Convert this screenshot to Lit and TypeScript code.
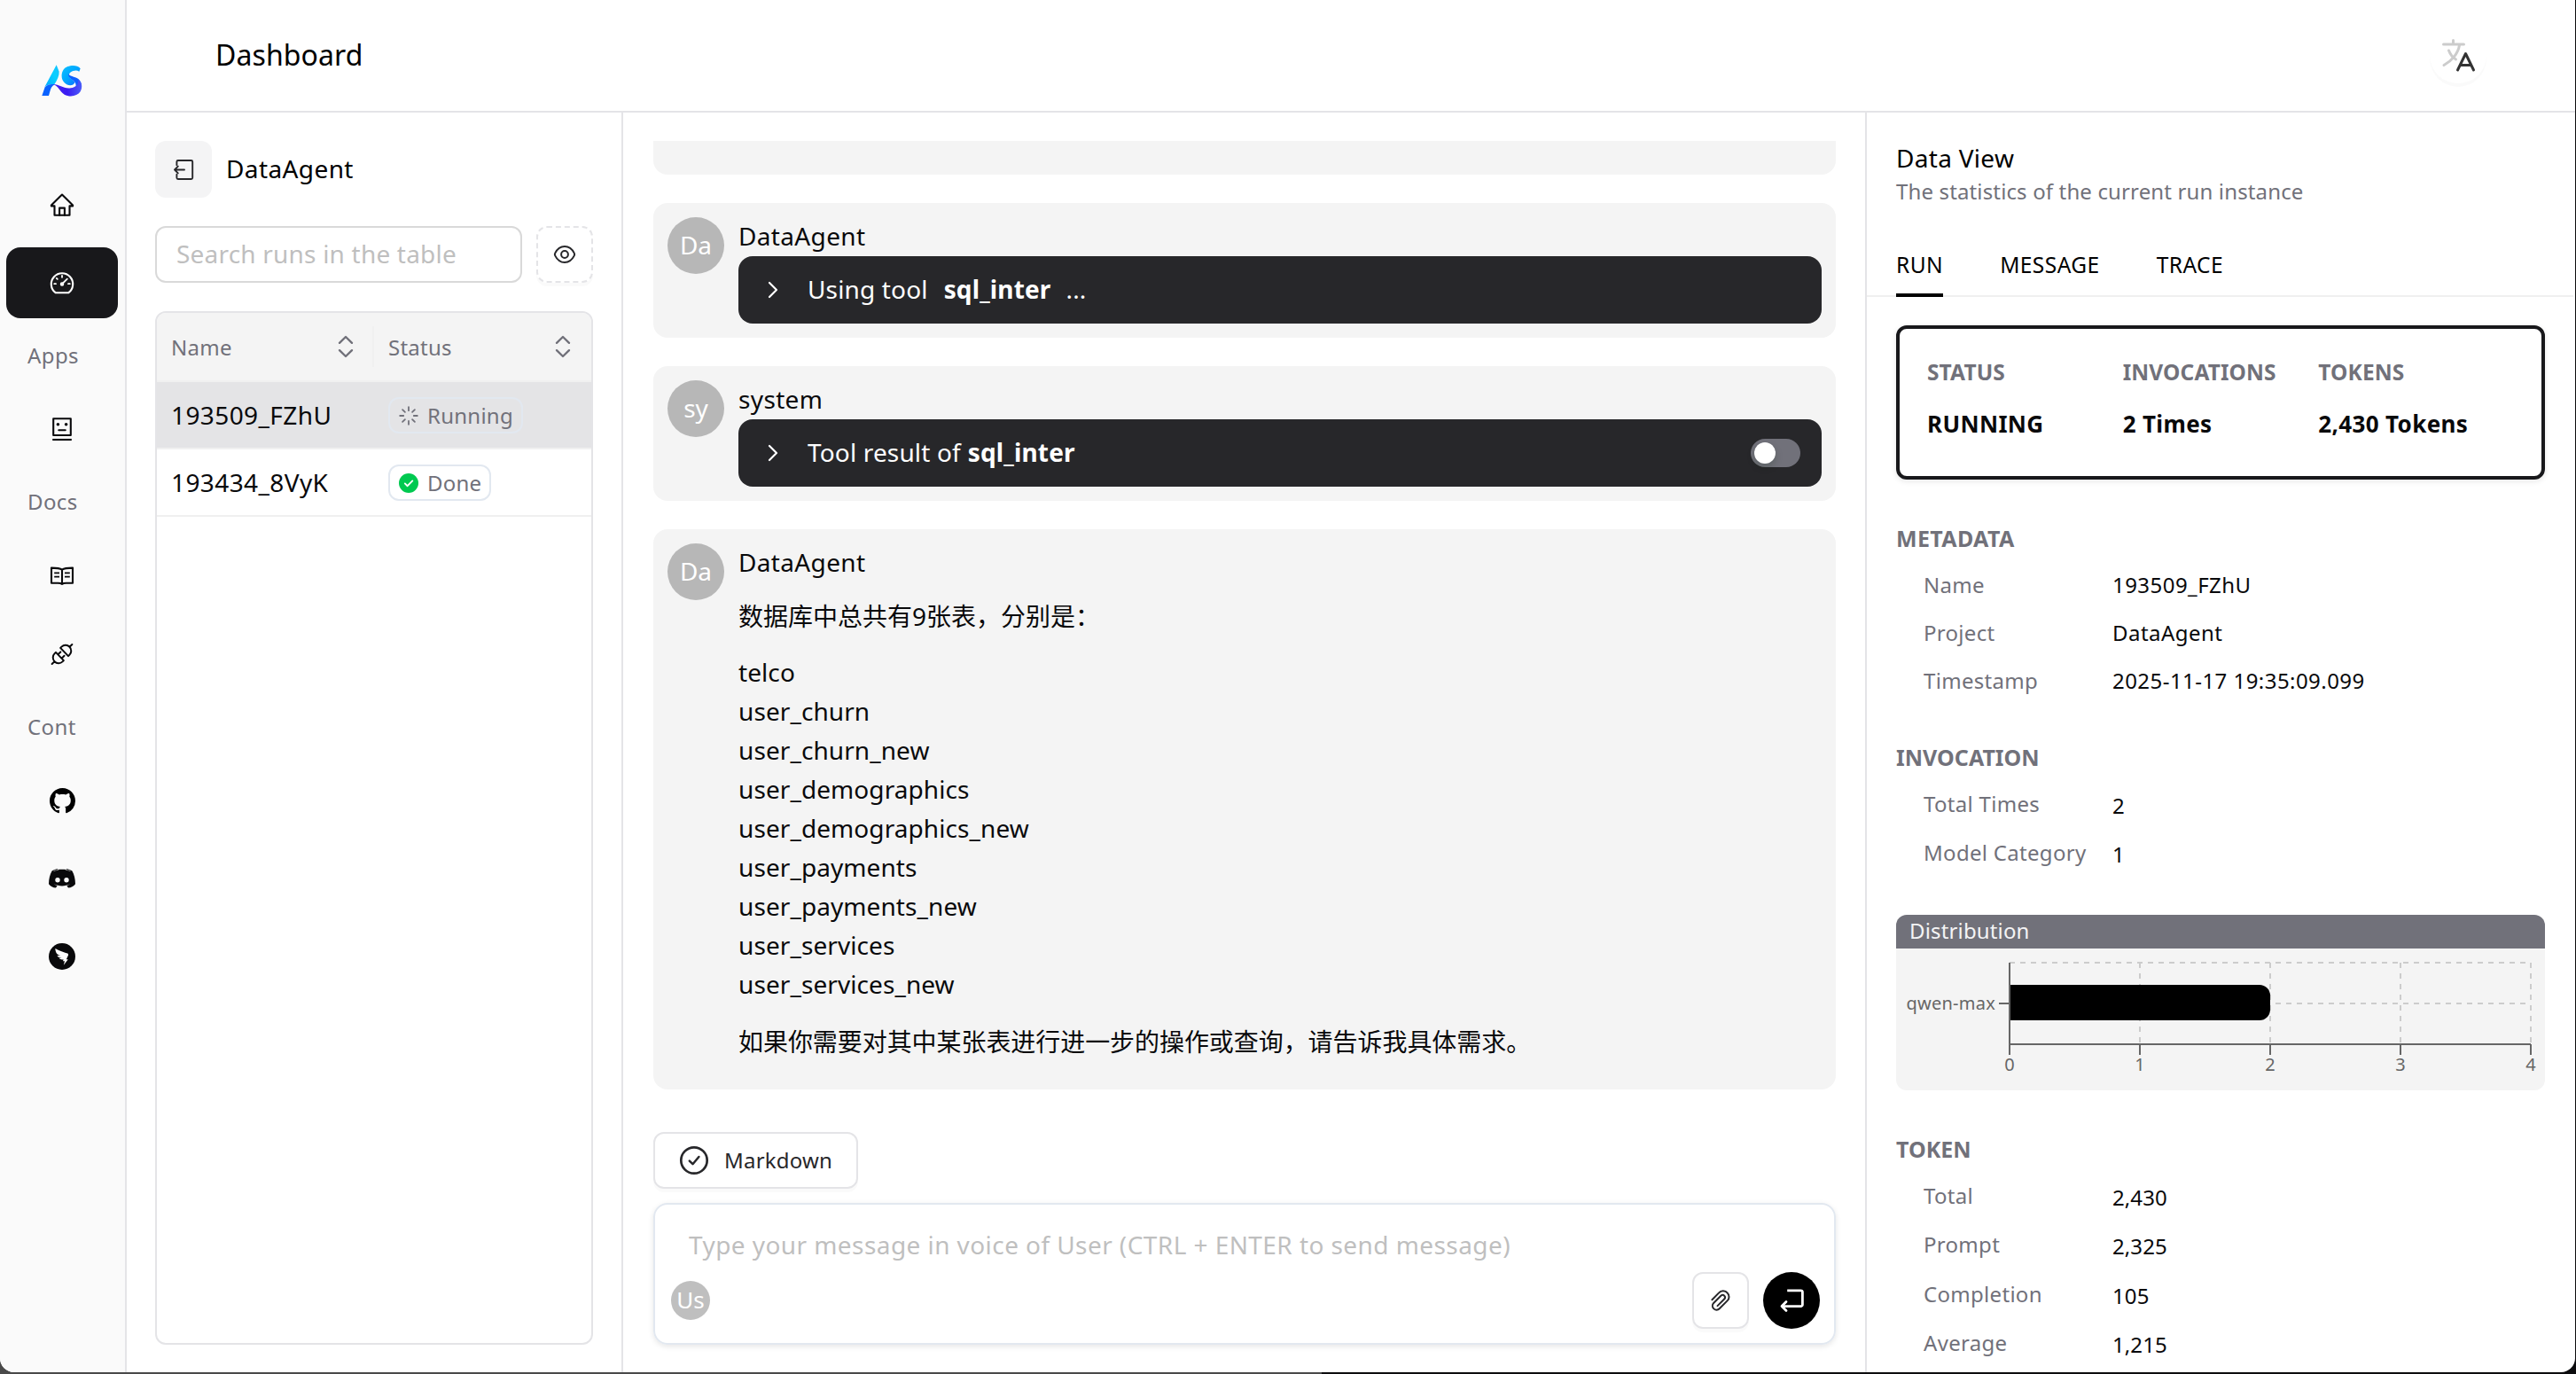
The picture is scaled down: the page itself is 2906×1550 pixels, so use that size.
import { LitElement, html, svg, css } from "lit";
import { customElement } from "lit/decorators.js";

const stroke = (w: number, body: unknown, size = 32) => html`<svg
  width=${size}
  height=${size}
  viewBox="0 0 ${size} ${size}"
  fill="none"
  stroke="currentColor"
  stroke-width=${w}
  stroke-linejoin="round"
  stroke-linecap="round"
  overflow="visible"
>${body}</svg>`;

const icons = {
  home: stroke(2.1, svg`<path d="M16 4.6 3.9 16.4V17.4H7.5V27.8H24.5V17.4H28.1V16.4Z"/><path d="M13.1 27.8V19.6H18.9V27.8"/>`),
  gauge: stroke(2.1, svg`<path d="M8.6 27.2A12.2 12.2 0 1 1 23.4 27.2Z"/><path stroke-width="1.8" d="M16 8V9.8M9.8 10.9l1 1M7.2 17.2H9M23 17.2h1.8M16.4 17 21.8 11.6"/><circle cx="16" cy="17.6" r="1.2" fill="currentColor"/>`),
  robot: stroke(2.1, svg`<rect x="6.2" y="4.2" width="19.6" height="18.8"/><path stroke-linecap="butt" d="M5.2 28H26.8"/><path d="M12.3 17.2H19.7"/><circle cx="11.4" cy="10.8" r="1.8" fill="currentColor" stroke="none"/><circle cx="20.6" cy="10.8" r="1.8" fill="currentColor" stroke="none"/>`),
  book: stroke(2.1, svg`<path d="M16 8.6C13.6 7 10 6.6 4 6.6V23.8H11.5C13.8 23.8 15 24.2 16 25 17 24.2 18.2 23.8 20.5 23.8H28V6.6C22 6.6 18.4 7 16 8.6ZM16 8.6V25"/><path stroke-width="1.6" stroke-linecap="butt" d="M7.2 12.4H13M7.2 16.6H13M19 12.4H24.8M19 16.6H24.8"/>`),
  plug: stroke(2, svg`<g transform="rotate(-44 16 16)"><path d="M19.6 9.6V22.4H21.4A6.4 6.4 0 0 0 21.4 9.6ZM27.8 16H31.8M12.4 9.6V22.4H10.6A6.4 6.4 0 0 1 10.6 9.6ZM4.2 16H.2M12.4 13H16.6M12.4 19H16.6"/></g>`),
  github: html`<svg width="29" height="29" viewBox="0 0 16 16" fill="#000"><path d="M8 0C3.58 0 0 3.58 0 8c0 3.54 2.29 6.53 5.47 7.59.4.07.55-.17.55-.38 0-.19-.01-.82-.01-1.49-2.01.37-2.53-.49-2.69-.94-.09-.23-.48-.94-.82-1.13-.28-.15-.68-.52-.01-.53.63-.01 1.08.58 1.23.82.72 1.21 1.87.87 2.33.66.07-.52.28-.87.51-1.07-1.78-.2-3.64-.89-3.64-3.95 0-.87.31-1.59.82-2.15-.08-.2-.36-1.02.08-2.12 0 0 .67-.21 2.2.82.64-.18 1.32-.27 2-.27.68 0 1.36.09 2 .27 1.53-1.04 2.2-.82 2.2-.82.44 1.1.16 1.92.08 2.12.51.56.82 1.27.82 2.15 0 3.07-1.87 3.75-3.65 3.95.29.25.54.73.54 1.48 0 1.07-.01 1.93-.01 2.2 0 .21.15.46.55.38A8.013 8.013 0 0016 8c0-4.42-3.58-8-8-8z"/></svg>`,
  discord: html`<svg width="30" height="22" viewBox="0 0 30 22"><path fill="#09090b" fill-rule="evenodd" d="M10 .2C7.4.6 5.2 1.4 3.6 2.6 1.2 6.6.1 11.600 0 17.200 1.800 19.800 4.800 21.300 8 21.500L9.600 19.300C7.900 18.800 6.700 18.100 5.900 17.300 11.500 20.100 18.500 20.100 24.100 17.300 23.300 18.100 22.100 18.800 20.400 19.300L22 21.500C25.200 21.300 28.200 19.800 30 17.200 29.900 11.600 28.800 6.600 26.400 2.600 24.800 1.400 22.600.6 20 .2L19.600 1C16.600.5 13.400.5 10.400 1ZM10 10A2.700 2.700 0 1 0 10 15.400 2.700 2.700 0 0 0 10 10ZM20 10A2.700 2.700 0 1 0 20 15.400 2.700 2.700 0 0 0 20 10Z"/><path d="M5.500 2.800C8 1.600 9.500 1.400 11 1.500M24.500 2.800C22 1.600 20.500 1.400 19 1.500" stroke="#bbb" stroke-width=".7" fill="none"/></svg>`,
  ding: html`<svg width="30" height="30" viewBox="0 0 30 30"><circle cx="15" cy="15" r="15" fill="#09090b"/><path fill="#fff" d="M7.300 6C9.500 7.600 16 9.700 21.200 11.600 22.300 12.200 22.200 13.200 21.700 14.300L19.800 18.300H21.800L16.800 24.800 18 20.300H16L16.600 18.200C14.800 18.600 13 18.500 11.700 17.300L14.600 16.700C11.700 16.500 10 15.500 9.500 14L13.500 14.200C10.500 13.400 8.600 12 8.100 10.100 7.700 8.700 7.300 7.300 7.300 6Z"/></svg>`,
  logo: html`<svg width="46" height="36" viewBox="23 41 138 108">
    <defs>
      <linearGradient id="la" x1="0" y1="1" x2="1" y2="0"><stop offset="0" stop-color="#00a8ff"/><stop offset=".6" stop-color="#08d0ff"/><stop offset="1" stop-color="#18c0ff"/></linearGradient>
      <linearGradient id="ls" x1="0" y1="0" x2="1" y2="1"><stop offset="0" stop-color="#0cc2ff"/><stop offset=".5" stop-color="#00a6ff"/><stop offset="1" stop-color="#1060ff"/></linearGradient>
      <linearGradient id="lr" x1="0" y1="0" x2="1" y2="0"><stop offset="0" stop-color="#4a20f0"/><stop offset=".5" stop-color="#3a1cf2"/><stop offset="1" stop-color="#4c5cf8"/></linearGradient>
    </defs>
    <path fill="url(#la)" d="M73 42 82 64C83 78 76 92 66 108 54 106 42 108 33 117Z"/>
    <path fill="#0a62ff" d="M34 117C42 108 54 105 68 108 58 112 54 120 51 132L47 146H24Z"/>
    <path fill="url(#ls)" d="M150 64C142 58 130 60 122 66 112 73 114 82 124 90L136 100C130 114 112 114 100 102 88 90 88 70 98 56 108 43 142 38 154 54Z"/>
    <path fill="#0f60ff" d="M113 72C122 84 140 80 152 94 162 108 160 126 146 132 130 132 146 112 134 98 124 90 112 84 113 72Z"/>
    <path fill="url(#lr)" d="M60 107C84 106 96 124 122 120 140 117 148 108 146 92 160 100 162 116 154 132 144 148 118 152 100 142 84 132 80 112 60 107Z"/>
  </svg>`,
  exit: stroke(1.9, svg`<path d="M4.400 7.200V3.500A1.500 1.500 0 0 1 5.900 2H20.700A1.500 1.500 0 0 1 22.200 3.500V21.500A1.500 1.500 0 0 1 20.700 23H5.900A1.500 1.500 0 0 1 4.400 21.500V17.800"/><path d="M13 12.500H2M5.800 8.600 2 12.500 5.800 16.400"/>`, 24),
  eye: html`<svg width="26" height="22" viewBox="0 0 26 22" fill="none" stroke="#27272a" stroke-width="2"><path d="M13 2C8.500 2 4.600 4.800 2.200 9.600A3 3 0 0 0 2.200 12.400C4.600 17.200 8.500 20 13 20S21.400 17.200 23.800 12.400A3 3 0 0 0 23.800 9.600C21.400 4.800 17.500 2 13 2Z"/><circle cx="13" cy="11" r="3.900"/></svg>`,
  lang: html`<svg width="40" height="40" viewBox="0 0 40 40" fill="none" stroke-linecap="round" stroke-linejoin="round" stroke-width="3"><g stroke="#ccc"><path d="M3.500 8H26.500M14.500 3.500V8M21.500 9C20 18.500 12.500 27 4 31.500M9.500 15C11 19 14 23 17.500 25"/></g><path stroke="#333" d="M19.500 37 28.500 18.500 37.500 37M22.500 31.500H34.500"/></svg>`,
  clip: html`<svg width="24" height="24" viewBox="0 0 24 24" fill="none" stroke="#27272a" stroke-width="2" stroke-linecap="round" stroke-linejoin="round"><path d="M2.400 11.300 9.900 3.600A6.200 6.200 0 0 1 19.800 3.700 6 6 0 0 1 19.800 12.100L10.700 21.300A4.400 4.400 0 0 1 4 21 4.400 4.400 0 0 1 4.100 15L12.600 6.500A2.700 2.700 0 0 1 16.400 10.300L8.500 18.100"/></svg>`,
  send: html`<svg width="32" height="32" viewBox="0 0 32 32" fill="none" stroke="#fff" stroke-width="2.800" stroke-linejoin="miter"><path d="M11.200 4.800H26.600A1.800 1.800 0 0 1 28.400 6.600V20.800A1.800 1.800 0 0 1 26.600 22.600H5"/><path stroke-linejoin="round" stroke-linecap="round" d="M10 17.600 5 22.600 10 27.600"/></svg>`,
  check: html`<svg width="34" height="34" viewBox="0 0 34 34" fill="none" stroke="#27272a" stroke-width="2.700"><circle cx="17" cy="17" r="14.700"/><path stroke-width="2.500" stroke-linecap="round" stroke-linejoin="round" d="M11.800 17.600 15.500 21.200 22.400 13"/></svg>`,
  sorter: html`<svg width="18" height="26" viewBox="0 0 18 26" fill="none" stroke="#71717a" stroke-width="2.400" stroke-linecap="round" stroke-linejoin="round"><path d="M2 8.800 9 2 16 8.800M2 17.200 9 24 16 17.200"/></svg>`,
  chevron: html`<svg width="12" height="20" viewBox="0 0 12 20" fill="none" stroke="#fff" stroke-width="2.200" stroke-linecap="round" stroke-linejoin="round"><path d="M2 2 10 10 2 18"/></svg>`,
  spinner: html`<svg width="22" height="22" viewBox="0 0 22 22" stroke="#71717a" stroke-width="1.800" stroke-linecap="round"><path d="M11 1.200V5.200M11 16.800V20.800M1.200 11H5.200M16.800 11H20.800M4.100 4.100 6.900 6.900M15.100 15.100 17.900 17.900M4.100 17.900 6.900 15.100M15.100 6.900 17.900 4.100"/></svg>`,
  done: html`<svg width="22" height="22" viewBox="0 0 22 22"><circle cx="11" cy="11" r="11" fill="#00c950"/><path d="M6.800 11.400 9.700 14.200 15.300 8.400" fill="none" stroke="#fff" stroke-width="1.900" stroke-linecap="round" stroke-linejoin="round"/></svg>`,
};

const tables = [
  "telco",
  "user_churn",
  "user_churn_new",
  "user_demographics",
  "user_demographics_new",
  "user_payments",
  "user_payments_new",
  "user_services",
  "user_services_new",
];

const base = css`
  * {
    box-sizing: border-box;
  }
  svg {
    display: block;
    flex: none;
  }
`;

@customElement("side-nav")
class SideNav extends LitElement {
  static styles = [
    base,
    css`
      :host {
        box-sizing: border-box;
        display: flex;
        flex-direction: column;
        align-items: center;
        width: 143px;
        flex: none;
        padding-right: 1px;
        background: #fafafa;
        border-right: 2px solid #e4e4e7;
        color: #09090b;
      }
      .logo {
        height: 183px;
        display: flex;
        align-items: center;
        padding-bottom: 1px;
      }
      .item {
        width: 126px;
        height: 80px;
        flex: none;
        display: flex;
        align-items: center;
        justify-content: center;
        border-radius: 16px;
        margin: 8px 0 0;
      }
      .active {
        background: #18181b;
        color: #fff;
      }
      .label {
        align-self: stretch;
        padding-left: 31px;
        height: 77.4px;
        line-height: 83px;
        font-size: 24px;
        letter-spacing: 0.4px;
        color: #71717a;
      }
    `,
  ];
  render() {
    return html`
      <div class="logo">${icons.logo}</div>
      <div class="item">${icons.home}</div>
      <div class="item active">${icons.gauge}</div>
      <div class="label">Apps</div>
      <div class="item">${icons.robot}</div>
      <div class="label">Docs</div>
      <div class="item">${icons.book}</div>
      <div class="item">${icons.plug}</div>
      <div class="label">Cont</div>
      <div class="item">${icons.github}</div>
      <div class="item">${icons.discord}</div>
      <div class="item">${icons.ding}</div>
    `;
  }
}

@customElement("run-list")
class RunList extends LitElement {
  static styles = [
    base,
    css`
      :host {
        box-sizing: border-box;
        display: flex;
        flex-direction: column;
        gap: 32px;
        width: 560px;
        flex: none;
        padding: 32px 32px 31px;
        border-right: 2px solid #e4e4e7;
        letter-spacing: 0.4px;
      }
      .title,
      .search {
        display: flex;
        align-items: center;
        gap: 16px;
        height: 64px;
        flex: none;
      }
      .back {
        width: 64px;
        height: 64px;
        border-radius: 12px;
        background: #f4f4f5;
        color: #27272a;
        display: flex;
        align-items: center;
        justify-content: center;
      }
      .title {
        color: #000;
        line-height: 42px;
      }
      .title span {
        padding-bottom: 2px;
      }
      .field {
        flex: 1;
        height: 64px;
        border: 2px solid #d9d9d9;
        border-radius: 12px;
        padding: 0 22px;
        line-height: 58px;
        letter-spacing: 0.2px;
        color: #bfbfbf;
      }
      .eye {
        width: 64px;
        height: 64px;
        border: 2px dashed #e4e4e7;
        border-radius: 12px;
        display: flex;
        align-items: center;
        justify-content: center;
        box-shadow: 0 4px 0 rgba(0, 0, 0, 0.02);
      }
      .table {
        flex: 1;
        border: 2px solid #e4e4e7;
        border-radius: 12px;
        overflow: hidden;
      }
      .row {
        display: grid;
        grid-template-columns: 1fr 1fr;
        align-items: center;
        height: 76px;
        padding-bottom: 1px;
        border-bottom: 2px solid #f0f0f0;
      }
      .head {
        height: 78px;
        padding-bottom: 0;
        background: #f4f4f4;
        font-size: 24px;
        letter-spacing: 0.25px;
        color: #71717a;
      }
      .head .cell {
        display: flex;
        align-items: center;
        justify-content: space-between;
        height: 46px;
        padding-right: 23px;
      }
      .head .first {
        border-right: 2px solid #f0f0f0;
        padding-right: 21px;
      }
      .cell {
        padding-left: 16px;
      }
      .selected {
        background: #e4e4e6;
      }
      .badge {
        display: inline-flex;
        align-items: center;
        gap: 10px;
        height: 41px;
        padding: 0 9px 0 10px;
        border: 2px solid #e2e8f0;
        border-radius: 12px;
        font-size: 24px;
        line-height: 36px;
        letter-spacing: 0.25px;
        color: #71717a;
        vertical-align: middle;
      }
    `,
  ];
  render() {
    return html`
      <div class="title"><div class="back">${icons.exit}</div><span>DataAgent</span></div>
      <div class="search">
        <div class="field">Search runs in the table</div>
        <div class="eye">${icons.eye}</div>
      </div>
      <div class="table">
        <div class="row head">
          <div class="cell first">Name ${icons.sorter}</div>
          <div class="cell">Status ${icons.sorter}</div>
        </div>
        <div class="row selected">
          <div class="cell">193509_FZhU</div>
          <div class="cell"><span class="badge">${icons.spinner}Running</span></div>
        </div>
        <div class="row">
          <div class="cell">193434_8VyK</div>
          <div class="cell"><span class="badge">${icons.done}Done</span></div>
        </div>
      </div>
    `;
  }
}

@customElement("chat-panel")
class ChatPanel extends LitElement {
  static styles = [
    base,
    css`
      :host {
        box-sizing: border-box;
        display: flex;
        flex-direction: column;
        flex: 1;
        min-width: 0;
        padding: 32px 33px 31px 34px;
      }
      .list {
        display: flex;
        flex-direction: column;
        gap: 32px;
        height: 1070px;
        flex: none;
      }
      .card {
        display: flex;
        gap: 16px;
        padding: 16px;
        border-radius: 16px;
        background: #f4f4f4;
      }
      .clipped {
        height: 38px;
        padding: 0;
        border-radius: 0 0 16px 16px;
      }
      .avatar {
        width: 64px;
        height: 64px;
        flex: none;
        border-radius: 50%;
        background: #b7b7b7;
        color: #fff;
        line-height: 62px;
        text-align: center;
      }
      .body {
        flex: 1;
      }
      .name {
        height: 44px;
        line-height: 42px;
        letter-spacing: 0.35px;
      }
      .tool {
        display: flex;
        align-items: center;
        height: 76px;
        padding: 0 24px 0 33px;
        border-radius: 16px;
        background: #27272a;
        color: #fff;
        line-height: 40px;
      }
      .tool span,
      .tool b {
        padding-bottom: 2px;
        letter-spacing: 0.15px;
      }
      .tool svg {
        margin-right: 33px;
      }
      .tool b {
        margin: 0 17px 0 18px;
      }
      .tool.result b {
        margin: 0 auto 0 8px;
      }
      .switch {
        width: 56px;
        height: 32px;
        border-radius: 16px;
        background: #71717a;
        padding: 4px;
      }
      .knob {
        width: 24px;
        height: 24px;
        border-radius: 50%;
        background: #fff;
        box-shadow: 0 4px 8px rgba(0, 35, 11, 0.2);
      }
      p {
        margin: 16px 0 19px;
        line-height: 44px;
      }
      p.last {
        margin: 21px 0 16px;
        letter-spacing: -0.06px;
      }
      .line {
        line-height: 44px;
        letter-spacing: 0.08px;
      }
      .mode {
        display: flex;
        align-items: center;
        align-self: flex-start;
        gap: 17px;
        width: 231px;
        height: 64px;
        margin-top: 48px;
        padding-left: 27px;
        border: 2px solid #e4e4e7;
        border-radius: 12px;
        box-shadow: 0 4px 0 rgba(0, 0, 0, 0.02);
        color: #27272a;
        font-size: 24px;
        letter-spacing: 0.2px;
      }
      .mode span {
        padding-bottom: 2px;
      }
      .composer {
        display: flex;
        flex-direction: column;
        justify-content: space-between;
        height: 160px;
        margin-top: 16px;
        padding: 25px 16px 16px;
        border: 2px solid #e2e8f0;
        border-radius: 16px;
        box-shadow: 0 2px 6px rgba(0, 0, 0, 0.1);
      }
      .hint {
        padding-left: 22px;
        line-height: 40px;
        color: #bfbfbf;
        letter-spacing: 0.43px;
      }
      .actions {
        display: flex;
        align-items: center;
        gap: 16px;
      }
      .me {
        width: 44px;
        height: 44px;
        margin: 0 auto 0 2px;
        border-radius: 50%;
        background: #bfbfbf;
        color: #fff;
        font-size: 26px;
        line-height: 43px;
        text-align: center;
      }
      .attach,
      .send {
        width: 64px;
        height: 64px;
        display: flex;
        align-items: center;
        justify-content: center;
      }
      .attach {
        border: 2px solid #e4e4e7;
        border-radius: 12px;
        box-shadow: 0 4px 0 rgba(0, 0, 0, 0.02);
      }
      .send {
        border-radius: 50%;
        background: #000;
      }
    `,
  ];
  render() {
    return html`
      <div class="list">
        <div class="card clipped"></div>
        <div class="card">
          <div class="avatar">Da</div>
          <div class="body">
            <div class="name">DataAgent</div>
            <div class="tool">${icons.chevron}<span>Using tool</span><b>sql_inter</b><span>...</span></div>
          </div>
        </div>
        <div class="card">
          <div class="avatar">sy</div>
          <div class="body">
            <div class="name">system</div>
            <div class="tool result">
              ${icons.chevron}<span>Tool result of</span><b>sql_inter</b>
              <div class="switch"><div class="knob"></div></div>
            </div>
          </div>
        </div>
        <div class="card">
          <div class="avatar">Da</div>
          <div class="body">
            <div class="name">DataAgent</div>
            <p>数据库中总共有9张表，分别是：</p>
            ${tables.map((t) => html`<div class="line">${t}</div>`)}
            <p class="last">如果你需要对其中某张表进行进一步的操作或查询，请告诉我具体需求。</p>
          </div>
        </div>
      </div>
      <div class="mode">${icons.check}<span>Markdown</span></div>
      <div class="composer">
        <div class="hint">Type your message in voice of User (CTRL + ENTER to send message)</div>
        <div class="actions">
          <div class="me">Us</div>
          <div class="attach">${icons.clip}</div>
          <div class="send">${icons.send}</div>
        </div>
      </div>
    `;
  }
}

@customElement("data-view")
class RunDataView extends LitElement {
  static styles = [
    base,
    css`
      :host {
        box-sizing: border-box;
        display: flex;
        flex-direction: column;
        width: 801px;
        flex: none;
        padding: 32px 34px 0 33px;
        border-left: 2px solid #e4e4e7;
        font-size: 24px;
        color: #09090b;
        overflow: hidden;
      }
      .title {
        font-size: 28px;
        line-height: 38px;
        letter-spacing: 0.3px;
        color: #000;
      }
      .sub {
        line-height: 38px;
        letter-spacing: 0.14px;
        color: #71717a;
      }
      .tabs {
        display: flex;
        gap: 64px;
        height: 70px;
        margin: 30px -32px 0 -33px;
        padding-left: 33px;
        border-bottom: 2px solid #f0f0f0;
        font-size: 24.5px;
        line-height: 68px;
        letter-spacing: 0.45px;
        color: #000;
      }
      .tab.on {
        height: 70px;
        border-bottom: 4px solid #000;
      }
      .summary {
        display: grid;
        grid-template-columns: repeat(3, 1fr);
        row-gap: 10px;
        height: 174px;
        flex: none;
        align-content: start;
        margin-top: 32px;
        padding: 25px 31px 0;
        border: 4px solid #18181b;
        border-radius: 12px;
        box-shadow: 0 2px 6px rgba(0, 0, 0, 0.1);
        font-weight: 700;
        line-height: 48px;
      }
      .summary .k {
        color: #71717a;
        font-size: 24.500px;
        letter-spacing: 0.1px;
      }
      .summary .v {
        font-size: 26px;
        letter-spacing: 0.35px;
        line-height: 49px;
      }
      h3 {
        margin: 0 0 6px;
        font-size: 25px;
        line-height: 38px;
        color: #71717a;
      }
      .meta {
        margin-top: 47px;
      }
      .meta h3 {
        margin-bottom: 7px;
        letter-spacing: 0.35px;
      }
      .inv {
        margin-top: 40px;
      }
      .tok {
        margin-top: 47px;
      }
      .row {
        display: grid;
        grid-template-columns: 213px 1fr;
        padding-left: 31px;
        height: 54px;
        line-height: 54px;
        letter-spacing: 0.3px;
      }
      .row div {
        letter-spacing: 0.45px;
      }
      .num .row {
        height: 55.4px;
        line-height: 55px;
      }
      .row span {
        color: #71717a;
      }
      .num .row div {
        padding-top: 2px;
      }
      .num .row div {
        letter-spacing: 0.1px;
      }
      .chart {
        height: 198px;
        flex: none;
        margin-top: 42px;
        border-radius: 12px;
        overflow: hidden;
        background: #f4f4f4;
      }
      .bar {
        height: 38px;
        padding-left: 15px;
        background: #71717a;
        color: #f4f4f5;
        line-height: 35px;
        letter-spacing: 0.15px;
      }
      text {
        font-size: 20px;
        fill: #666;
      }
      .category {
        letter-spacing: 0.25px;
      }
    `,
  ];
  private row(k: string, v: string) {
    return html`<div class="row"><span>${k}</span><div>${v}</div></div>`;
  }
  private chart() {
    const x = (i: number) => 128 + i * 147;
    return html`<svg width="732" height="160" viewBox="0 0 732 160">
      <g stroke="#ccc" stroke-width="2" stroke-dasharray="6 6">
        <path d="M128 16H716M128 62H716" />
        ${[1, 2, 3, 4].map((i) => svg`<path d="M${x(i)} 16V108"/>`)}
      </g>
      <path d="M128 41H410A12 12 0 0 1 422 53V69A12 12 0 0 1 410 81H128Z" fill="#000" />
      <g stroke="#666" stroke-width="2" fill="none">
        <path d="M128 16V108H716M116 62H128" />
        ${[0, 1, 2, 3, 4].map((i) => svg`<path d="M${x(i)} 108V120"/>`)}
      </g>
      <text class="category" x="112" y="69" text-anchor="end">qwen-max</text>
      ${[0, 1, 2, 3, 4].map((i) => svg`<text x=${x(i)} y="138" text-anchor="middle">${i}</text>`)}
    </svg>`;
  }
  render() {
    return html`
      <div class="title">Data View</div>
      <div class="sub">The statistics of the current run instance</div>
      <div class="tabs">
        <div class="tab on">RUN</div>
        <div class="tab">MESSAGE</div>
        <div class="tab">TRACE</div>
      </div>
      <div class="summary">
        <div class="k">STATUS</div>
        <div class="k">INVOCATIONS</div>
        <div class="k">TOKENS</div>
        <div class="v">RUNNING</div>
        <div class="v">2 Times</div>
        <div class="v">2,430 Tokens</div>
      </div>
      <div class="meta">
        <h3>METADATA</h3>
        ${this.row("Name", "193509_FZhU")} ${this.row("Project", "DataAgent")}
        ${this.row("Timestamp", "2025-11-17 19:35:09.099")}
      </div>
      <div class="inv num">
        <h3>INVOCATION</h3>
        ${this.row("Total Times", "2")} ${this.row("Model Category", "1")}
      </div>
      <div class="chart">
        <div class="bar">Distribution</div>
        ${this.chart()}
      </div>
      <div class="tok num">
        <h3>TOKEN</h3>
        ${this.row("Total", "2,430")} ${this.row("Prompt", "2,325")}
        ${this.row("Completion", "105")} ${this.row("Average", "1,215")}
      </div>
    `;
  }
}

@customElement("app-root")
class AppRoot extends LitElement {
  static styles = [
    base,
    css`
      :host {
        box-sizing: border-box;
        display: block;
        width: 2906px;
        height: 1550px;
        padding: 0 1px 2px 0;
        overflow: hidden;
        background: linear-gradient(90deg, #4a4a4a 0 1491px, #0c0c0e 1491px);
        font-family: "Noto Sans", "Noto Sans CJK SC", sans-serif;
        font-size: 28px;
        color: #09090b;
      }
      .window {
        display: flex;
        height: 1548px;
        background: #fff;
        border-radius: 0 0 16px 16px;
        overflow: hidden;
      }
      .main {
        flex: 1;
        min-width: 0;
        display: flex;
        flex-direction: column;
      }
      header {
        display: flex;
        align-items: center;
        justify-content: space-between;
        height: 127px;
        flex: none;
        padding: 0 100px 2px 100px;
        border-bottom: 2px solid #e4e4e7;
        font-size: 32px;
        line-height: 44px;
        letter-spacing: 0.1px;
        color: #000;
      }
      .lang {
        width: 64px;
        height: 64px;
        display: flex;
        align-items: center;
        justify-content: center;
        border-radius: 50%;
        box-shadow: 0 4px 0 rgba(0, 0, 0, 0.02);
      }
      .content {
        flex: 1;
        min-height: 0;
        display: flex;
      }
    `,
  ];
  render() {
    return html`
      <div class="window">
        <side-nav></side-nav>
        <div class="main">
          <header>
            <span>Dashboard</span>
            <div class="lang">${icons.lang}</div>
          </header>
          <div class="content">
            <run-list></run-list>
            <chat-panel></chat-panel>
            <data-view></data-view>
          </div>
        </div>
      </div>
    `;
  }
}
